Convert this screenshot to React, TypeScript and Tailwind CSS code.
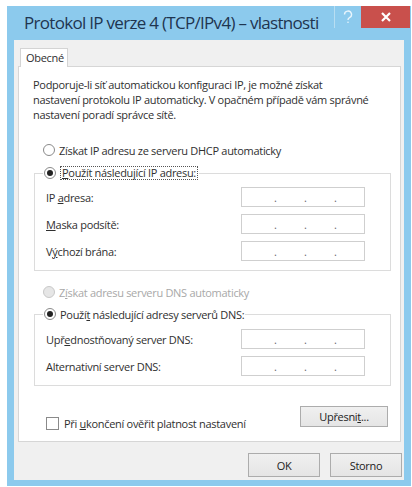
import React from 'react';

const font = "font-['Open_Sans','Noto_Sans',sans-serif]";

function Radio({ checked, disabled }: { checked?: boolean; disabled?: boolean }) {
  return (
    <span
      className={`flex h-[12px] w-[12px] shrink-0 items-center justify-center rounded-full border ${
        disabled ? 'border-[#c8c8c8] bg-[#e6e6e6]' : 'border-[#8a8a8a] bg-white'
      }`}
    >
      {checked && <span className="h-[6px] w-[6px] rounded-full bg-[#222]" />}
    </span>
  );
}

function IpBox() {
  return (
    <div className="flex h-[20px] w-[124px] shrink-0 items-center border border-[#cfcfcf] bg-white pl-[32px] text-[11px] leading-none tracking-normal text-[#666]">
      <span className="w-[30px]">.</span>
      <span className="w-[30px]">.</span>
      <span>.</span>
    </div>
  );
}

function FieldRow({ label }: { label: React.ReactNode }) {
  return (
    <div className="flex h-[20px] items-center pl-[11px]">
      <span className="w-[195px] shrink-0">{label}</span>
      <IpBox />
    </div>
  );
}

function WinButton({ children, className = '' }: { children: React.ReactNode; className?: string }) {
  return (
    <button
      className={`flex items-center justify-center border border-[#acacac] bg-gradient-to-b from-[#f0f0f0] to-[#e5e5e5] text-[11px] text-[#222] ${className}`}
    >
      {children}
    </button>
  );
}

export default function App() {
  return (
    <div className={`h-[487px] w-[412px] overflow-hidden bg-white pl-[7px] pt-[6px] ${font}`}>
      <div className="flex h-[480px] w-[404px] flex-col bg-[#8ccaed]">
        {/* title bar */}
        <div className="flex h-[34px] shrink-0 items-start">
          <span className="ml-[17px] mt-[6px] text-[17px] leading-[22px] tracking-[-0.7px] text-[#1f3550]">
            Protokol IP verze 4 (TCP/IPv4) – vlastnosti
          </span>
          <div className="ml-auto mr-[1px] flex h-[22px]">
            <div className="flex w-[27px] items-center justify-center border-l border-[#b8def2]">
              <svg width="12" height="14" viewBox="0 0 12 14" fill="none" stroke="#e9f5fc" strokeWidth="1.4">
                <path d="M2.5 4.5a3.5 3.5 0 1 1 5 3.2c-1 .5-1.5 1.1-1.5 2.3" />
                <circle cx="6" cy="12.3" r="0.8" fill="#e9f5fc" stroke="none" />
              </svg>
            </div>
            <div className="flex w-[49px] items-center justify-center bg-[#c9504c]">
              <svg width="10" height="10" viewBox="0 0 10 10" stroke="white" strokeWidth="2.2">
                <path d="M1 1l8 8M9 1l-8 8" />
              </svg>
            </div>
          </div>
        </div>

        {/* client area */}
        <div className="mx-[7px] flex flex-1 flex-col bg-[#f0f0f0] text-[11px] leading-[15px] tracking-[-0.3px] text-[#2f2f2f]">
          <div className="ml-[6px] mt-[8px] flex">
            <div className="relative z-10 -mb-px h-[19px] w-[48px] border border-b-0 border-[#d4d4d4] bg-white pl-[5px] pt-[1px] text-[11px] leading-[16px]">
              Obecné
            </div>
          </div>

          <div className="ml-[4px] mr-[3px] flex h-[376px] flex-col border border-[#d6d6d6] bg-white pl-[14px]">
            <p className="mt-[10px]">
              Podporuje-li síť automatickou konfiguraci IP, je možné získat
              <br />
              nastavení protokolu IP automaticky. V opačném případě vám správné
              <br />
              nastavení poradí správce sítě.
            </p>

            <div className="ml-[10px] mt-[20px] flex h-[16px] items-center gap-[4px]">
              <Radio />
              <span>Získat IP adresu ze serveru DHCP automaticky</span>
            </div>

            <fieldset className="ml-px mt-[7px] w-[357px] border border-[#dcdcdc] px-0 pb-[9px]">
              <legend className="ml-[8px] flex h-[16px] items-center gap-[4px] px-[1px]">
                <Radio checked />
                <span className="border border-dotted border-[#555] px-[1px] leading-[12px]">
                  <span className="underline">P</span>oužít následující IP adresu:
                </span>
              </legend>
              <div className="mt-[6px] flex flex-col gap-[7px]">
                <FieldRow label={<>IP <span className="underline">a</span>dresa:</>} />
                <FieldRow label={<><span className="underline">M</span>aska podsítě:</>} />
                <FieldRow label={<>V<span className="underline">ý</span>chozí brána:</>} />
              </div>
            </fieldset>

            <div className="ml-[10px] mt-[13px] flex h-[16px] items-center gap-[4px] text-[#a8a8a8]">
              <Radio disabled />
              <span>Z<span className="underline">í</span>skat adresu serveru DNS automaticky</span>
            </div>

            <fieldset className="ml-px mt-[6px] w-[357px] border border-[#dcdcdc] px-0 pb-[9px]">
              <legend className="ml-[8px] flex h-[16px] items-center gap-[4px] px-[1px]">
                <Radio checked />
                <span>Použí<span className="underline">t</span> následující adresy serverů DNS:</span>
              </legend>
              <div className="mt-[7px] flex flex-col gap-[7px]">
                <FieldRow label={<>Upř<span className="underline">e</span>dnostňovaný server DNS:</>} />
                <FieldRow label={<>Alternativní server DNS:</>} />
              </div>
            </fieldset>

            <div className="mt-[20px] flex items-start">
              <div className="ml-[13px] mt-[10px] flex items-center gap-[5px]">
                <span className="h-[13px] w-[13px] border border-[#8a8a8a] bg-white" />
                <span>Při <span className="underline">u</span>končení ověřit platnost nastavení</span>
              </div>
              <WinButton className="ml-auto mr-[12px] h-[21px] w-[88px]">
                Upřesni<span className="underline">t</span>...
              </WinButton>
            </div>
          </div>

          <div className="mr-[2px] mt-[11px] flex justify-end gap-[10px]">
            <WinButton className="h-[24px] w-[72px]">OK</WinButton>
            <WinButton className="h-[24px] w-[72px]">Storno</WinButton>
          </div>
        </div>
        <div className="h-[6px] shrink-0" />
      </div>
    </div>
  );
}
